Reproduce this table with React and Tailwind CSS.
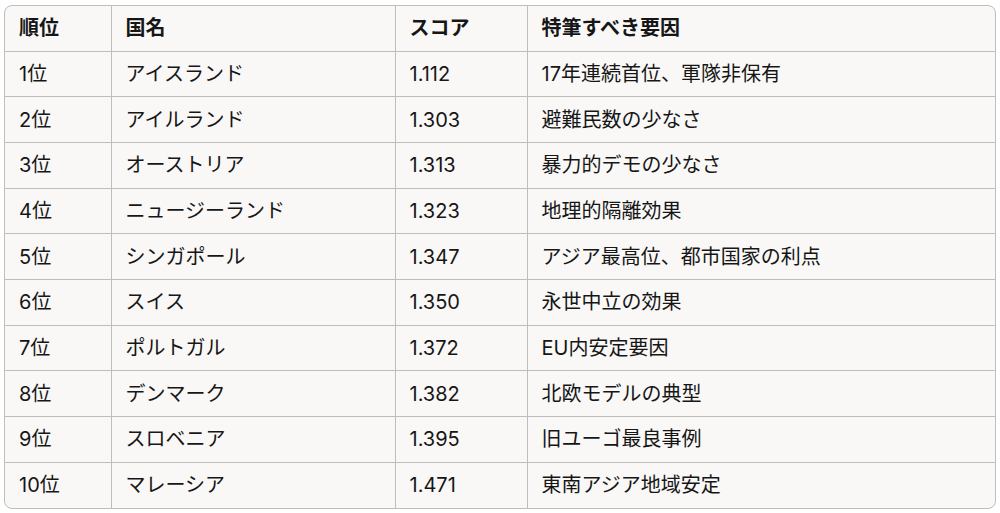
const rows = [
  ['1位', 'アイスランド', '1.112', '17年連続首位、軍隊非保有'],
  ['2位', 'アイルランド', '1.303', '避難民数の少なさ'],
  ['3位', 'オーストリア', '1.313', '暴力的デモの少なさ'],
  ['4位', 'ニュージーランド', '1.323', '地理的隔離効果'],
  ['5位', 'シンガポール', '1.347', 'アジア最高位、都市国家の利点'],
  ['6位', 'スイス', '1.350', '永世中立の効果'],
  ['7位', 'ポルトガル', '1.372', 'EU内安定要因'],
  ['8位', 'デンマーク', '1.382', '北欧モデルの典型'],
  ['9位', 'スロベニア', '1.395', '旧ユーゴ最良事例'],
  ['10位', 'マレーシア', '1.471', '東南アジア地域安定'],
];

const headers = ['順位', '国名', 'スコア', '特筆すべき要因'];

export default function App() {
  return (
    <div
      className="w-[1000px] h-[513px] bg-[#ffffff] pt-[5px] pl-[4px]"
      style={{ fontFamily: 'Inter, "Noto Sans CJK JP", sans-serif' }}
    >
      <div className="w-[992px] rounded-lg border border-[#bdbdbb] overflow-hidden bg-[#f9f8f6]">
        <table className="w-full border-collapse table-fixed text-[20px] text-[#161616]">
          <colgroup>
            <col className="w-[106px]" />
            <col className="w-[284px]" />
            <col className="w-[132px]" />
            <col />
          </colgroup>
          <thead>
            <tr className="h-[45px]">
              {headers.map((h, i) => (
                <th
                  key={h}
                  className={`text-left font-bold px-[14px] border-b border-[#bdbdbb] ${i > 0 ? 'border-l' : ''}`}
                >
                  {h}
                </th>
              ))}
            </tr>
          </thead>
          <tbody>
            {rows.map((r, ri) => (
              <tr key={r[0]} className="h-[45.7px]">
                {r.map((c, i) => (
                  <td
                    key={i}
                    className={`px-[14px] border-[#bdbdbb] ${i > 0 ? 'border-l' : ''} ${ri < rows.length - 1 ? 'border-b' : ''}`}
                  >
                    {c}
                  </td>
                ))}
              </tr>
            ))}
          </tbody>
        </table>
      </div>
    </div>
  );
}
